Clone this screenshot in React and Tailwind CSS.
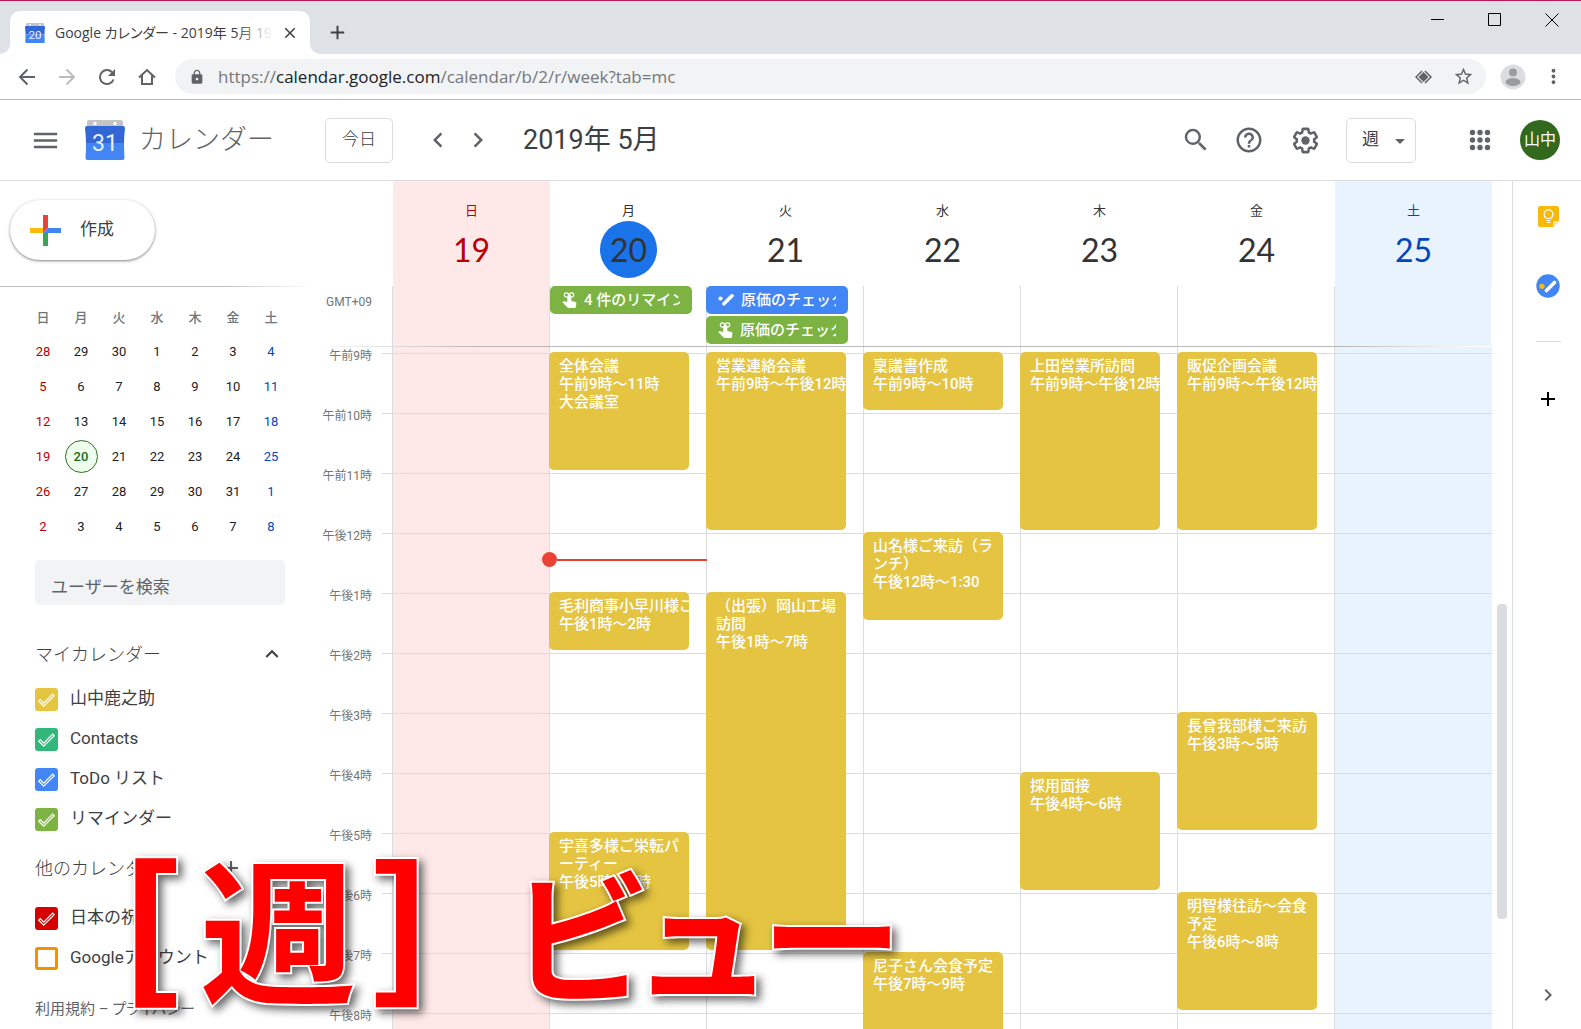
import React from 'react';
import {
    MdAdd,
    MdArrowDropDown,
    MdChevronLeft,
    MdChevronRight,
    MdClose,
    MdExpandLess,
    MdHelpOutline,
    MdLock,
    MdMenu,
    MdMoreVert,
    MdSearch,
    MdStarBorder,
} from 'react-icons/md';

const FIRST_HOUR = 9;

const HOURS = [
    '午前9時', '午前10時', '午前11時', '午後12時', '午後1時', '午後2時',
    '午後3時', '午後4時', '午後5時', '午後6時', '午後7時', '午後8時',
];

const DAYS = [
    {
        name: '日', date: 19, text: 'text-[#b80000]', bg: 'bg-[#fee9e8]', allDay: [], events: [],
    },
    {
        name: '月', date: 20, today: true, now: 12.45,
        allDay: [{ kind: 'reminder', title: '4 件のリマインダー' }],
        events: [
            { start: 9, end: 11, title: '全体会議', time: '午前9時〜11時', place: '大会議室' },
            { start: 13, end: 14, title: '毛利商事小早川様ご来訪', time: '午後1時〜2時' },
            { start: 17, end: 19, title: '宇喜多様ご栄転パーティー', time: '午後5時〜7時' },
        ],
    },
    {
        name: '火', date: 21,
        allDay: [
            { kind: 'task', title: '原価のチェック' },
            { kind: 'reminder', title: '原価のチェック' },
        ],
        events: [
            { start: 9, end: 12, title: '営業連絡会議', time: '午前9時〜午後12時' },
            { start: 13, end: 19, title: '（出張）岡山工場訪問', time: '午後1時〜7時' },
        ],
    },
    {
        name: '水', date: 22, allDay: [],
        events: [
            { start: 9, end: 10, title: '稟議書作成', time: '午前9時〜10時' },
            { start: 12, end: 13.5, title: '山名様ご来訪（ランチ）', time: '午後12時〜1:30' },
            { start: 19, end: 21, title: '尼子さん会食予定', time: '午後7時〜9時' },
        ],
    },
    {
        name: '木', date: 23, allDay: [],
        events: [
            { start: 9, end: 12, title: '上田営業所訪問', time: '午前9時〜午後12時' },
            { start: 16, end: 18, title: '採用面接', time: '午後4時〜6時' },
        ],
    },
    {
        name: '金', date: 24, allDay: [],
        events: [
            { start: 9, end: 12, title: '販促企画会議', time: '午前9時〜午後12時' },
            { start: 15, end: 17, title: '長曾我部様ご来訪', time: '午後3時〜5時' },
            { start: 18, end: 20, title: '明智様往訪〜会食予定', time: '午後6時〜8時' },
        ],
    },
    {
        name: '土', date: 25, text: 'text-[#0047bb]', bg: 'bg-[#e8f3fe]', allDay: [], events: [],
    },
];

const WEEKS = [
    [28, 29, 30, 1, 2, 3, 4],
    [5, 6, 7, 8, 9, 10, 11],
    [12, 13, 14, 15, 16, 17, 18],
    [19, 20, 21, 22, 23, 24, 25],
    [26, 27, 28, 29, 30, 31, 1],
    [2, 3, 4, 5, 6, 7, 8],
];

const MY_CALENDARS = [
    { name: '山中鹿之助', color: 'bg-[#e4c441] border-[#e4c441]', checked: true },
    { name: 'Contacts', color: 'bg-[#33b679] border-[#33b679]', checked: true },
    { name: 'ToDo リスト', color: 'bg-[#4285f4] border-[#4285f4]', checked: true },
    { name: 'リマインダー', color: 'bg-[#7cb342] border-[#7cb342]', checked: true },
];

const OTHER_CALENDARS = [
    { name: '日本の祝日', color: 'bg-[#d50000] border-[#d50000]', checked: true },
    { name: 'Googleアカウント', color: 'bg-white border-[#f09300]', checked: false },
];

const CalendarLogo = ({ day, className }) => (
    <svg viewBox="0 0 40 40" className={className} aria-hidden="true">
        <path d="M4 0h32q2 0 2 2v6H2V2q0-2 2-2z" fill="#c4c4c4" />
        <circle cx="10" cy="3.5" r="1.7" fill="#fff" />
        <circle cx="30" cy="3.5" r="1.7" fill="#fff" />
        <path d="M2 6h36q2 0 2 2-1 9-1 15H1Q1 17 0 8q0-2 2-2z" fill="#3367d6" />
        <path d="M1 23h38q0 8 .5 15 0 2-2 2h-35q-2 0-2-2Q1 31 1 23z" fill="#4285f4" />
        <text x="20" y="31" textAnchor="middle" fontSize="23" fontFamily="Roboto" fill="#e8f0fe">{day}</text>
    </svg>
);

const ReminderIcon = () => (
    <svg viewBox="0 0 15 16" className="w-[15px] h-4 shrink-0" fill="#fff" aria-hidden="true">
        <path d="M5.300 4.500a2 2 0 0 1 4 0V9l4.200 1q1 .4.900 1.400l-.5 3.400q-.1 1.200-1.200 1.200H6.800q-.7 0-1.200-.5L.3 10.300l.8-.8q.4-.4 1-.2l3.200.8z" />
        <circle cx="4.500" cy="3" r="2.200" fill="none" stroke="#fff" strokeWidth="1.200" />
        <circle cx="9.500" cy="3" r="2.200" fill="none" stroke="#fff" strokeWidth="1.200" />
    </svg>
);

const TaskIcon = () => (
    <svg viewBox="0 0 16 16" className="w-4 h-4 shrink-0" fill="none" aria-hidden="true">
        <circle cx="2.500" cy="6.500" r="2.100" fill="#fff" />
        <path d="M6 11.800l8-8" stroke="#fff" strokeWidth="3.600" strokeLinecap="round" />
    </svg>
);

const GearIcon = () => (
    <svg viewBox="0 0 24 24" className="w-[31px] h-[31px]" aria-hidden="true">
        <g transform="translate(1.2 1.2) scale(0.9)">
            <path
                d="M19.430 12.980c.04-.32.07-.64.07-.98s-.03-.66-.07-.98l2.110-1.650a.5.5 0 0 0 .12-.64l-2-3.460a.5.5 0 0 0-.61-.22l-2.490 1a7.300 7.300 0 0 0-1.690-.98l-.38-2.650A.49.49 0 0 0 14 2h-4a.49.49 0 0 0-.49.42l-.38 2.650c-.61.25-1.170.59-1.690.98l-2.490-1a.5.5 0 0 0-.61.22l-2 3.460a.49.49 0 0 0 .12.64l2.110 1.650c-.04.32-.07.65-.07.98s.03.66.07.98l-2.110 1.650a.5.5 0 0 0-.12.64l2 3.460c.12.22.39.3.61.22l2.490-1c.52.4 1.080.73 1.690.98l.38 2.650c.03.24.24.42.49.42h4c.25 0 .46-.18.49-.42l.38-2.650a7.300 7.300 0 0 0 1.690-.98l2.490 1c.23.09.49 0 .61-.22l2-3.460a.5.5 0 0 0-.12-.64z"
                fill="none"
                stroke="#5f6368"
                strokeWidth="2.200"
            />
            <circle cx="12" cy="12" r="3.600" fill="#5f6368" />
        </g>
    </svg>
);

// nine round dots, 3 x 3
const AppsIcon = () => (
    <svg viewBox="0 0 30 30" className="w-[30px] h-[30px]" fill="currentColor" aria-hidden="true">
        {[7.5, 15, 22.5].map((y) => [7.5, 15, 22.5].map((x) => (
            <circle key={`${x}-${y}`} cx={x} cy={y} r="2.700" />
        )))}
    </svg>
);

const TitleBar = () => (
    <div className="flex items-end h-[54px] bg-[#dee1e6] border-t border-[#c2185b]">
        <div className="w-[10px] h-[10px] bg-white"><div className="w-full h-full bg-[#dee1e6] rounded-br-[10px]" /></div>
        <div className="flex items-center w-[300px] h-[43px] px-[15px] bg-white rounded-t-[10px]">
            <CalendarLogo day="20" className="w-5 h-5 shrink-0" />
            <span className="relative flex-1 ml-[10px] overflow-hidden whitespace-nowrap text-sm text-[#3c4043] font-['Open_Sans','Noto_Sans_CJK_JP',sans-serif] [font-feature-settings:'palt']">
                Google カレンダー - 2019年 5月 19
                <span className="absolute inset-y-0 right-0 w-9 bg-linear-to-r from-white/0 to-white" />
            </span>
            <button type="button" aria-label="タブを閉じる" className="ml-2 -mr-1 text-[#3c4043]">
                <MdClose className="w-[18px] h-[18px]" />
            </button>
        </div>
        <div className="w-[10px] h-[10px] bg-white"><div className="w-full h-full bg-[#dee1e6] rounded-bl-[10px]" /></div>
        <button type="button" aria-label="新しいタブ" className="mb-[10px] ml-[6px] text-[#3c4043]">
            <MdAdd className="w-[23px] h-[23px]" />
        </button>
        <div className="flex gap-[43px] ml-auto mr-[22px] mb-[27px] text-black">
            <button type="button" aria-label="最小化">
                <svg viewBox="0 0 14 14" className="w-[14px] h-[14px]"><path d="M0 6.500h13" stroke="currentColor" /></svg>
            </button>
            <button type="button" aria-label="最大化">
                <svg viewBox="0 0 14 14" className="w-[14px] h-[14px]"><path d="M.5.5h12v12H.5z" fill="none" stroke="currentColor" /></svg>
            </button>
            <button type="button" aria-label="閉じる">
                <svg viewBox="0 0 14 14" className="w-[14px] h-[14px]"><path d="M.5.500l13 13m0-13l-13 13" stroke="currentColor" /></svg>
            </button>
        </div>
    </div>
);

const Toolbar = () => (
    <div className="flex items-center h-[46px] pl-[17px] pr-[16px] border-b border-[#b4b6b8] bg-white text-[#5f6368]">
        <button type="button" aria-label="戻る" className="w-5 mr-5">
            <svg viewBox="0 0 20 20" className="w-5 h-5" fill="none" stroke="currentColor" strokeWidth="2"><path d="M18 10H3m7.500-7.500L3 10l7.500 7.500" /></svg>
        </button>
        <button type="button" aria-label="進む" className="w-5 mr-5 text-[#babcbe]">
            <svg viewBox="0 0 20 20" className="w-5 h-5" fill="none" stroke="currentColor" strokeWidth="2"><path d="M2 10h15M9.500 2.500L17 10l-7.500 7.500" /></svg>
        </button>
        <button type="button" aria-label="再読み込み" className="w-5 mr-5">
            <svg viewBox="0 0 20 20" className="w-5 h-5" fill="none" stroke="currentColor" strokeWidth="2"><path d="M16.500 12.500A7 7 0 1 1 15 5.200" /><path d="M18 2v7h-7z" fill="currentColor" stroke="none" /></svg>
        </button>
        <button type="button" aria-label="ホーム" className="w-5 mr-[18px]">
            <svg viewBox="0 0 20 20" className="w-5 h-5" fill="none" stroke="currentColor" strokeWidth="2"><path d="M2 10.500l8-7.500 8 7.500M5 8.500V17h10V8.500" /></svg>
        </button>
        <div className="flex items-center flex-1 h-[35px] pl-[14px] pr-3 rounded-full bg-[#f1f3f4]">
            <MdLock className="w-4 h-4 mr-[13px]" />
            <a href="#address" className="flex-1 whitespace-nowrap text-[17px] font-['Open_Sans','Noto_Sans',sans-serif] text-[#74787c]">
                https://<span className="text-[#202124]">calendar.google.com</span>/calendar/b/2/r/week?tab=mc
            </a>
            <button type="button" aria-label="翻訳" className="mr-[21px]">
                <svg viewBox="0 0 17 14" className="w-[17px] h-[14px]" fill="none" stroke="currentColor" strokeWidth="1.500">
                    <path d="M7 1L1 7l6 6M10 1l6 6-6 6" />
                    <path d="M8.500 2l5 5-5 5-5-5z" fill="currentColor" stroke="none" />
                </svg>
            </button>
            <button type="button" aria-label="ブックマーク"><MdStarBorder className="w-[21px] h-[21px]" /></button>
        </div>
        <button type="button" aria-label="プロフィール" className="ml-[14px] mr-4">
            <svg viewBox="0 0 26 26" className="w-[26px] h-[26px]">
                <circle cx="13" cy="13" r="12.500" fill="#dcdde0" />
                <circle cx="13" cy="8.500" r="4" fill="#9b9c9f" />
                <ellipse cx="13" cy="18" rx="7.500" ry="4" fill="#9b9c9f" />
            </svg>
        </button>
        <button type="button" aria-label="メニュー"><MdMoreVert className="w-[23px] h-[23px]" /></button>
    </div>
);

const AppHeader = () => (
    <header className="flex items-center h-[81px] pl-[30px] pr-[21px] border-b border-[#dadce0] bg-white text-[#5f6368]">
        <button type="button" aria-label="メインメニュー"><MdMenu className="w-[31px] h-[31px]" /></button>
        <CalendarLogo day="31" className="w-10 h-10 ml-6 mr-[14px]" />
        <span className="w-[186px] text-[27px] leading-10 font-light whitespace-nowrap">カレンダー</span>
        <button type="button" className="w-[68px] h-[45px] rounded-[5px] border border-[#dadce0] text-[17px] font-light text-[#3c4043]">今日</button>
        <button type="button" aria-label="前の週" className="ml-[30px]"><MdChevronLeft className="w-[30px] h-[30px]" /></button>
        <button type="button" aria-label="次の週" className="ml-[10px]"><MdChevronRight className="w-[30px] h-[30px]" /></button>
        <h1 className="ml-[30px] text-[27px] leading-10 whitespace-nowrap text-[#3c4043]">2019年 5月</h1>
        <button type="button" aria-label="検索" className="ml-auto mr-[23px]"><MdSearch className="w-[30px] h-[30px]" /></button>
        <button type="button" aria-label="ヘルプ" className="mr-[26px]"><MdHelpOutline className="w-[30px] h-[30px]" /></button>
        <button type="button" aria-label="設定" className="mr-[25px]"><GearIcon /></button>
        <div className="relative w-[70px] h-[45px]">
            <select aria-label="表示" className="appearance-none w-full h-full pl-[15px] rounded-[5px] border border-[#dadce0] bg-white text-[17px] text-[#3c4043]">
                <option>週</option>
            </select>
            <MdArrowDropDown className="absolute right-1 top-[11px] w-6 h-6 pointer-events-none" />
        </div>
        <button type="button" aria-label="Google アプリ" className="ml-[49px] mr-[25px]"><AppsIcon /></button>
        <button type="button" className="w-10 h-10 rounded-full bg-[#33691e] text-base text-white">山中</button>
    </header>
);

const MiniCalendar = () => (
    <table className="w-[266px] ml-6 mt-[15px] table-fixed text-center text-[13px] text-[#3c4043]">
        <thead>
            <tr className="h-8 text-[#70757a]">
                {DAYS.map((day) => <th key={day.name} className="font-medium">{day.name}</th>)}
            </tr>
        </thead>
        <tbody>
            {WEEKS.map((week, row) => (
                <tr key={row} className="h-[35px]">
                    {week.map((date, col) => (
                        <td key={col} className={DAYS[col].text || 'text-[#202124]'}>
                            {row === 3 && col === 1 ? (
                                <span className="flex items-center justify-center w-[33px] h-[33px] mx-auto rounded-full border border-[#33691e] bg-[#efffee] font-medium text-[#1b6b1b]">{date}</span>
                            ) : date}
                        </td>
                    ))}
                </tr>
            ))}
        </tbody>
    </table>
);

const CalendarItem = ({ item }) => (
    <label className="flex items-center h-10 text-[17px] text-[#3c4043] whitespace-nowrap">
        <span className="relative w-[23px] h-[23px] mr-3">
            <input
                type="checkbox"
                defaultChecked={item.checked}
                className={`appearance-none block w-[23px] h-[23px] rounded-[3px] border-3 ${item.color}`}
            />
            {item.checked && (
                <svg viewBox="0 0 23 23" className="absolute inset-0" fill="none" stroke="#fff" strokeWidth="1.200">
                    <path d="M5.200 11.700l-1.500 1.500 5 5L19.200 7.700l-1.500-1.500-9 9z" />
                </svg>
            )}
        </span>
        {item.name}
    </label>
);

const Sidebar = () => (
    <aside className="w-[312px] shrink-0 overflow-hidden">
        <div className="h-[105px] pt-[19px] pl-[10px]">
            <button type="button" className="flex items-center w-[145px] h-[60px] pl-5 rounded-full bg-white text-[17px] text-[#3c4043] shadow-[0_1px_2px_rgba(60,64,67,0.5),0_1px_3px_1px_rgba(60,64,67,0.15)]">
                <svg viewBox="0 0 31 31" className="w-[31px] h-[31px] mr-[19px]" aria-hidden="true">
                    <path d="M13 0h5v13l-5 5z" fill="#ea4335" />
                    <path d="M0 13h13v5H0z" fill="#fbbc04" />
                    <path d="M18 13h13v5H13z" fill="#4285f4" />
                    <path d="M13 18h5v13h-5z" fill="#34a853" />
                </svg>
                作成
            </button>
        </div>
        <div className="h-px bg-linear-to-r from-[#bdbdbd] from-70% to-white" />
        <MiniCalendar />
        <div className="w-[250px] ml-[35px]">
            <input
                type="text"
                aria-label="ユーザーを検索"
                placeholder="ユーザーを検索"
                className="block w-full h-[45px] mt-4 px-4 pt-2 rounded-[5px] bg-[#f1f3f4] text-[17px] placeholder:text-[#5f6368]"
            />
            <div className="flex items-center h-10 mt-[29px] text-[#3c4043]">
                <h2 className="flex-1 text-[18px] font-light">マイカレンダー</h2>
                <MdExpandLess className="w-[26px] h-[26px]" />
            </div>
            <div className="mt-[5px]">
                {MY_CALENDARS.map((item) => <CalendarItem key={item.name} item={item} />)}
            </div>
            <div className="flex items-center h-10 mt-[9px] text-[#3c4043]">
                <h2 className="flex-1 text-[18px] font-light">他のカレンダー</h2>
                <MdAdd className="w-6 h-6 mr-4 text-[#5f6368]" />
                <MdExpandLess className="w-[26px] h-[26px]" />
            </div>
            <div className="mt-[10px]">
                {OTHER_CALENDARS.map((item) => <CalendarItem key={item.name} item={item} />)}
            </div>
            <p className="mt-[21px] text-[15px] leading-5 text-[#5f6368] whitespace-nowrap">
                <a href="#terms">利用規約</a> – <a href="#privacy" className="[font-feature-settings:'palt']">プライバシー</a>
            </p>
        </div>
    </aside>
);

const DayHeader = ({ day }) => (
    <div className={`flex flex-col items-center flex-1 pt-5 ${day.bg || ''} ${day.text || 'text-[#333]'}`}>
        <span className="text-[13px] leading-5">{day.name}</span>
        <span className={`flex items-center justify-center w-[57px] h-[57px] rounded-full text-[32px] font-['Lato',sans-serif] ${day.today ? 'bg-[#1a73e8]' : ''}`}>
            {day.date}
        </span>
    </div>
);

const AllDayChip = ({ item }) => (
    <div className={`flex items-center h-7 mb-[2px] pl-3 pr-3 rounded-[5px] text-[15px] font-medium text-white ${item.kind === 'task' ? 'bg-[#4285f4]' : 'bg-[#7cb342]'}`}>
        {item.kind === 'task' ? <TaskIcon /> : <ReminderIcon />}
        <span className="flex-1 ml-[7px] overflow-hidden whitespace-nowrap">{item.title}</span>
    </div>
);

// one grid row = half an hour (30px)
const EventCard = ({ event }) => {
    const row = (event.start - FIRST_HOUR) * 2 + 1;
    const span = (event.end - event.start) * 2;
    return (
        <div
            className="-ml-px mr-[17px] mb-[2px] pt-[5px] pl-[10px] rounded-[5px] bg-[#e4c441] text-[15px] leading-[18px] font-medium text-white overflow-hidden"
            style={{ gridRow: `${row} / span ${span}` }}
        >
            <div className={span > 2 ? '' : 'whitespace-nowrap'}>{event.title}</div>
            <div className="whitespace-nowrap">{event.time}</div>
            {event.place && <div>{event.place}</div>}
        </div>
    );
};

const DayColumn = ({ day }) => (
    <div className="relative grid auto-rows-[30px] flex-1 min-w-0 pt-[5px] border-r border-[#dadce0] last:border-transparent">
        {day.events.map((event) => <EventCard key={event.start} event={event} />)}
        {day.now && (
            <div
                className="absolute -left-2 -right-px flex items-center h-[15px]"
                style={{ top: (day.now - FIRST_HOUR) * 60 - 2 }}
            >
                <span className="w-[15px] h-[15px] rounded-full bg-[#ea4335]" />
                <span className="flex-1 h-[2px] bg-[#ea4335]" />
            </div>
        )}
    </div>
);

const WeekView = () => (
    <main className="flex flex-col flex-1 min-w-0">
        <div className="flex h-[105px] pl-[81px] pr-5">
            {DAYS.map((day) => <DayHeader key={day.date} day={day} />)}
        </div>
        <div className="flex h-[60px] pr-5">
            <div className="w-[81px] pt-[7px] pr-5 border-r border-[#dadce0] text-right text-xs leading-[18px] text-[#70757a]">GMT+09</div>
            {DAYS.map((day) => (
                <div key={day.date} className={`flex-1 min-w-0 border-r border-[#dadce0] last:border-transparent bg-clip-padding ${day.bg || ''}`}>
                    <div className={day.date === 20 ? 'mr-[14px]' : '-ml-px mr-[15px]'}>
                        {day.allDay.map((item) => <AllDayChip key={item.kind} item={item} />)}
                    </div>
                </div>
            ))}
        </div>
        <div className="h-px shrink-0 bg-[linear-gradient(to_right,#ffffff_0%,#b8b8b8_14%,#b8b8b8_86%,#ffffff_97%)]" />
        <div className="flex flex-1 min-h-0 overflow-hidden">
            <div className="relative flex flex-1 pl-[80px]">
                {/* day tints and hour lines sit behind the columns */}
                <div className="absolute inset-0 flex pl-[81px]">
                    {DAYS.map((day) => <div key={day.date} className={`flex-1 ${day.bg || ''}`} />)}
                </div>
                <div className="absolute inset-0 pt-[6px]">
                    {HOURS.map((hour) => (
                        <div key={hour} className="flex h-[60px]">
                            <span className="w-[70px] h-5 pr-[10px] -mt-[7px] text-right text-xs leading-5 whitespace-nowrap text-[#70757a]">{hour}</span>
                            <span className="flex-1 border-t border-[#dadce0]" />
                        </div>
                    ))}
                </div>
                <div className="relative flex flex-1 border-l border-[#dadce0]">
                    {DAYS.map((day) => <DayColumn key={day.date} day={day} />)}
                </div>
            </div>
            <div className="w-5 pl-[5px] pt-[257px]">
                <div className="w-[10px] h-[315px] rounded-[4px] bg-[#dadce0]" />
            </div>
        </div>
    </main>
);

const SidePanel = () => (
    <aside className="flex flex-col items-center w-[69px] shrink-0 pt-[25px] pl-[2px] pb-[22px] border-l border-[#dadce0]">
        <button type="button" aria-label="Keep">
            <svg viewBox="0 0 21 21" className="w-[21px] h-[21px]">
                <path d="M2 0h17q2 0 2 2v13l-6 6H2q-2 0-2-2V2q0-2 2-2z" fill="#f9b908" />
                <path d="M21 15l-6 6v-5q0-1 1-1z" fill="#fde293" />
                <path d="M8.500 12.500q-2.500-1.500-2.500-4.200a4.500 4.500 0 0 1 9 0q0 2.700-2.500 4.200zM8.500 14.500h4M8.800 16.500h3.400" fill="none" stroke="#fff" strokeWidth="1.200" />
            </svg>
        </button>
        <button type="button" aria-label="ToDo リスト" className="mt-[47px]">
            <svg viewBox="0 0 24 24" className="w-6 h-6">
                <circle cx="12" cy="12" r="11.700" fill="#4285f4" />
                <circle cx="6" cy="12.300" r="2.600" fill="#fbbc04" />
                <path d="M10.500 16.500l8-8" stroke="#fff" strokeWidth="3.600" strokeLinecap="round" />
            </svg>
        </button>
        <span className="w-[25px] h-px mt-[43px] bg-[#dadce0]" />
        <button type="button" aria-label="アドオンを取得" className="mt-[45px] text-black"><MdAdd className="w-6 h-6" /></button>
        <button type="button" aria-label="サイドパネルを非表示" className="mt-auto text-[#5f6368]"><MdChevronRight className="w-6 h-6" /></button>
    </aside>
);

const Caption = () => (
    <p className="absolute left-6 bottom-3 flex items-baseline whitespace-pre text-[156px] leading-none font-bold text-[#f00] [-webkit-text-stroke:4px_white] [paint-order:stroke_fill] drop-shadow-[4px_4px_4px_rgba(0,0,0,0.6)] pointer-events-none">
        <span className="font-black">［</span>
        <span className="ml-5 mr-4">週</span>
        <span className="font-black">］</span>
        <span className="-ml-4 text-[142px] [font-feature-settings:'palt']">ビュー</span>
    </p>
);

const App = () => (
    <div className="relative flex flex-col h-screen overflow-hidden bg-white font-['Roboto','Noto_Sans_CJK_JP',sans-serif]">
        <TitleBar />
        <Toolbar />
        <AppHeader />
        <div className="flex flex-1 min-h-0">
            <Sidebar />
            <WeekView />
            <SidePanel />
        </div>
        <Caption />
    </div>
);

export default App;
